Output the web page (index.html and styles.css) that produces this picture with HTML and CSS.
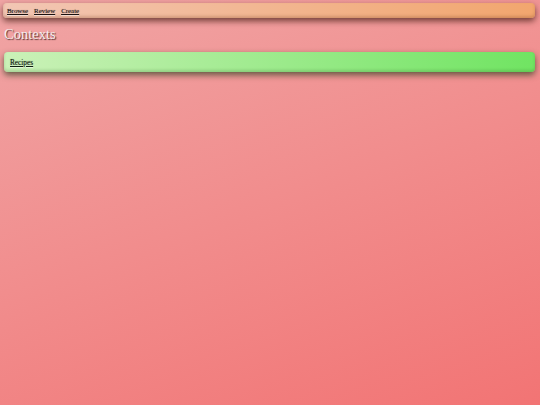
FILE: index.html
```html
<!DOCTYPE html>
<html>
<head>
<meta charset="utf-8">
<link rel="stylesheet" href="styles.css">
</head>
<body>
<nav class="nav">
  <a href="#">Browse</a>
  <a href="#">Review</a>
  <a href="#">Create</a>
</nav>
<h1 class="title">Contexts</h1>
<div class="card">
  <a href="#">Recipes</a>
</div>
</body>
</html>
```

FILE: styles.css
```css
html {
  height: 100%;
}
body {
  margin: 0;
  min-height: 100%;
  padding: 3px 5px 0 3px;
  box-sizing: border-box;
  font-family: "Liberation Serif", "Times New Roman", serif;
  background: linear-gradient(160deg, #f0a5a5 0%, #f27474 100%);
}
.nav {
  display: flex;
  gap: 6px;
  align-items: center;
  height: 15px;
  padding: 0 4px;
  border-radius: 4px;
  background: linear-gradient(to right, #f2c6b4, #f2a66e);
  box-shadow: 0 3px 6px rgba(70, 30, 20, 0.75), inset 0 -2px 3px rgba(120, 60, 30, 0.25);
}
.nav a, .card a {
  color: #1a1010;
  font-size: 6.9px;
  text-shadow: 0 0 1px rgba(0, 0, 0, 0.5), 0 1px 1px rgba(255, 255, 255, 0.5);
}
.title {
  margin: 8px 0 0 1px;
  font-size: 14.5px;
  font-weight: normal;
  color: #f6eeee;
  text-shadow: 1px 1px 1px rgba(50, 25, 25, 0.85);
  line-height: 17px;
}
.card {
  margin: 9px 0 0 1px;
  height: 20px;
  display: flex;
  align-items: center;
  padding: 0 6px;
  border-radius: 4px;
  background: linear-gradient(to right, #cbf1b8, #70e462);
  box-shadow: 0 3px 6px rgba(40, 60, 30, 0.7), inset 0 -2px 3px rgba(40, 90, 30, 0.2);
}
.card a {
  color: #0f1f0f;
  font-size: 7.3px;
}
```
